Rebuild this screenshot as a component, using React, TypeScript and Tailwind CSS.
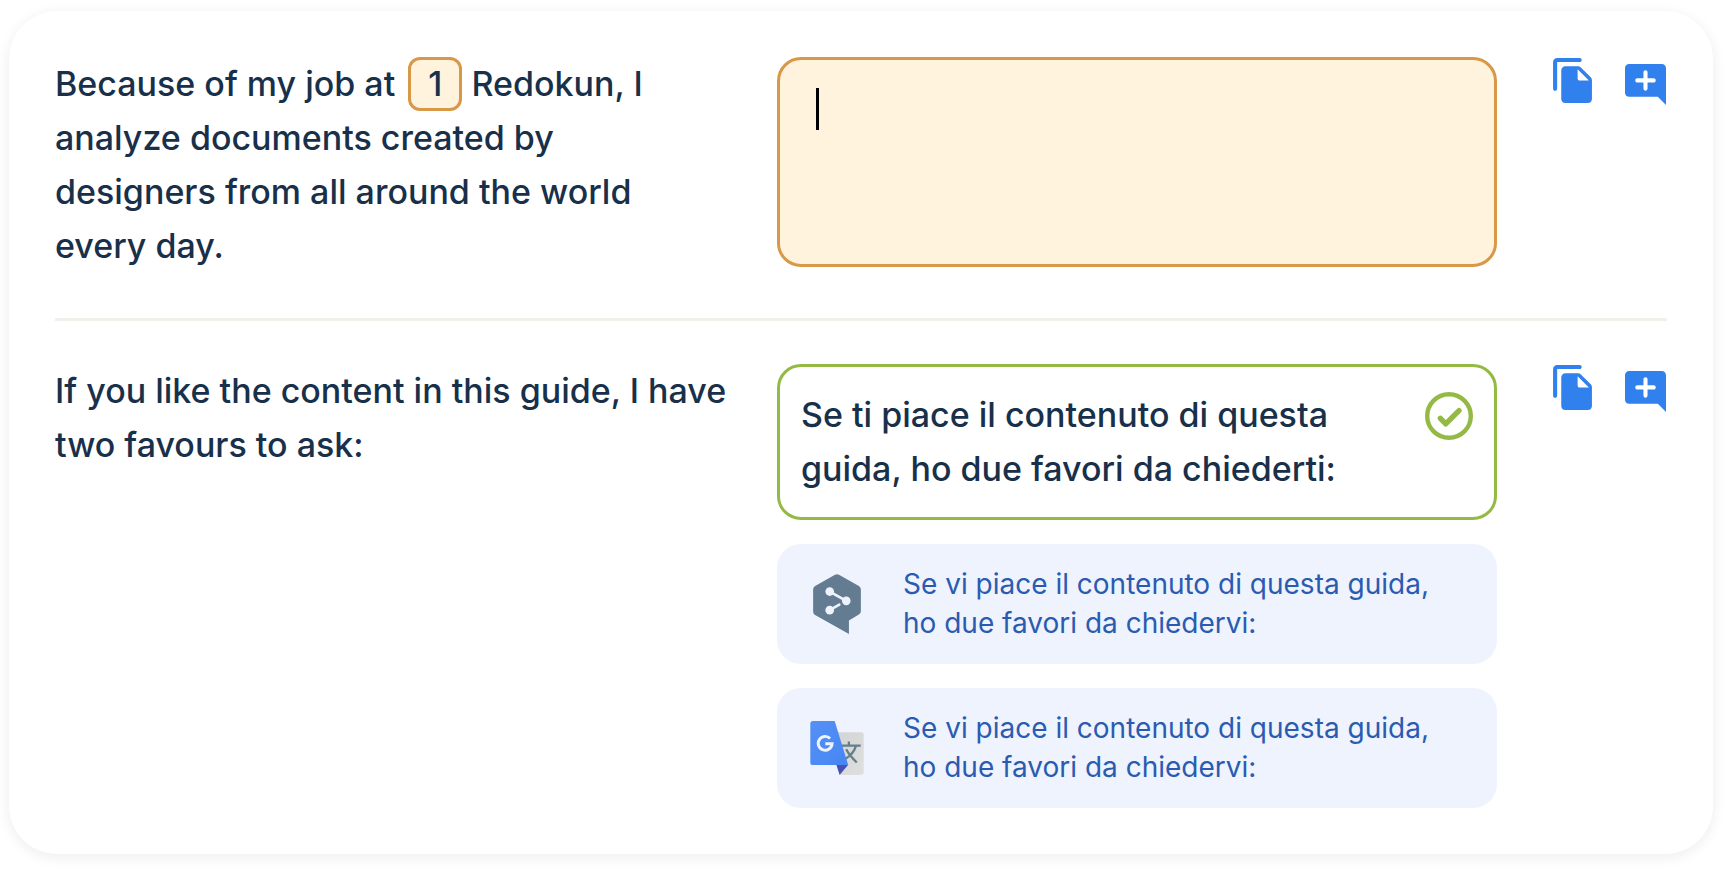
import type { ReactNode } from "react";

function CopyIcon() {
  return (
    <svg viewBox="2 1 19 22" className="h-[45px] w-[39px]" fill="currentColor" aria-hidden="true">
      <path d="M15 1H4c-1.1 0-2 .9-2 2v13c0 .55.45 1 1 1s1-.45 1-1V3h11c.55 0 1-.45 1-1s-.45-1-1-1zm.59 4.59l4.83 4.83c.37.37.58.88.58 1.41V21c0 1.1-.9 2-2 2H7.99C6.89 23 6 22.1 6 21l.01-14c0-1.1.89-2 1.99-2h6.17c.53 0 1.04.21 1.42.59zM15 12h4.5L14 6.5V11c0 .55.45 1 1 1z" />
    </svg>
  );
}

function AddCommentIcon() {
  return (
    <svg viewBox="2 2 20 20" className="size-[41px]" fill="currentColor" aria-hidden="true">
      <path d="M22 4c0-1.1-.9-2-2-2H4c-1.1 0-2 .9-2 2v12c0 1.1.9 2 2 2h14l4 4V4zm-6 7h-3v3c0 .55-.45 1-1 1s-1-.45-1-1v-3H8c-.55 0-1-.45-1-1s.45-1 1-1h3V6c0-.55.45-1 1-1s1 .45 1 1v3h3c.55 0 1 .45 1 1s-.45 1-1 1z" />
    </svg>
  );
}

function CheckIcon() {
  return (
    <svg viewBox="0 0 48 48" className="size-12" fill="none" stroke="#94ba45" role="img" aria-label="Translated">
      <circle cx="24" cy="24" r="21.8" strokeWidth="4.4" />
      <path d="M15.4 26.3L20.7 31.8L34 18.7" strokeWidth="5.4" strokeLinecap="round" strokeLinejoin="round" />
    </svg>
  );
}

function DeeplIcon() {
  return (
    <svg viewBox="99 100 144 181" className="h-[60px] w-12" aria-hidden="true">
      <path
        d="M165 102.500Q171 99 177 102.500L237 136.500Q243 140 243 147V212Q243 219 237 222.500L207 240V281L105 223.500Q99 220 99 213V147Q99 140 105 136.500Z"
        fill="#647c91"
      />
      <g fill="#eef3fe" stroke="#eef3fe">
        <circle cx="149" cy="153" r="13" stroke="none" />
        <circle cx="199" cy="181" r="13" stroke="none" />
        <circle cx="149" cy="209" r="13" stroke="none" />
        <path d="M149 153L199 181M149 209L178 192.500" strokeWidth="8" strokeLinecap="round" />
      </g>
    </svg>
  );
}

function GoogleTranslateIcon() {
  return (
    <svg viewBox="90 106 162 164" className="size-[54px]" aria-hidden="true">
      <defs>
        <linearGradient id="gt-blue" x1="0" y1="0" x2="1" y2="1">
          <stop offset="0" stopColor="#5590f5" />
          <stop offset="1" stopColor="#4686f3" />
        </linearGradient>
        <linearGradient id="gt-gray" x1="0" y1="0" x2="1" y2="1">
          <stop offset="0" stopColor="#d2d3d3" />
          <stop offset="1" stopColor="#dfdfdf" />
        </linearGradient>
      </defs>
      <path d="M160 140H244Q252 140 252 148V262Q252 270 244 270H179Z" fill="url(#gt-gray)" />
      <path
        d="M186 181H243M207 168V181M228 183Q223 205 194 223M199 192Q208 210 231 232"
        fill="none"
        stroke="#647f89"
        strokeWidth="7"
      />
      <path d="M169 239H205L179 270Z" fill="#4651b8" />
      <path d="M98 106H164L205 240H98Q90 240 90 232V114Q90 106 98 106Z" fill="url(#gt-blue)" />
      <path
        d="M150 159A21 21 0 1 0 156 175H135.500"
        fill="none"
        stroke="#eef3fb"
        strokeWidth="9"
      />
    </svg>
  );
}

function Actions() {
  return (
    <div className="flex items-start justify-end gap-[33px] pt-px pr-px text-[#3080ed]">
      <button type="button" aria-label="Copy source text">
        <CopyIcon />
      </button>
      <button type="button" aria-label="Add comment" className="mt-1.5">
        <AddCommentIcon />
      </button>
    </div>
  );
}

function Suggestion({ icon, text }: { icon: ReactNode; text: string }) {
  return (
    <button
      type="button"
      className="flex w-full items-center gap-[39px] rounded-3xl bg-[#eef3fe] px-[33px] py-[21px] text-left text-[28px] leading-[39px] text-[#2b5bb0]"
    >
      <span className="flex w-[54px] shrink-0 justify-center">{icon}</span>
      <span>{text}</span>
    </button>
  );
}

const row = "grid grid-cols-[minmax(0,17fr)_minmax(0,18fr)_128px] items-start gap-x-[42px]";
const suggestion = "Se vi piace il contenuto di questa guida, ho due favori da chiedervi:";

export default function App() {
  return (
    <div className="bg-white px-[9px] pt-[11px] pb-[22px] font-['Inter','Liberation_Sans',sans-serif] text-[34px] leading-[54px] font-medium text-[#18304a]">
      <main className="mr-2 rounded-[48px] bg-white px-[46px] py-[46px] shadow-[0_3px_14px_rgba(10,30,30,0.08)]">
        <section className={row}>
          <label htmlFor="target-1" className="pr-10">
            Because of my job at{" "}
            <span className="-my-1 ml-1 inline-block w-[54px] rounded-xl border-3 border-[#d99748] bg-[#fff3dd] text-center leading-[48px]">
              1
            </span>{" "}
            Redokun, I analyze documents created by designers from all around the world every day.
          </label>
          <div className="relative">
            <textarea
              id="target-1"
              rows={3}
              className="block h-[210px] w-full resize-none rounded-3xl border-3 border-[#d99748] bg-[#fff3dd] px-9 py-6 caret-transparent outline-none"
            />
            <span className="pointer-events-none absolute top-[31px] left-[39px] h-[42px] w-[3px] bg-black" />
          </div>
          <Actions />
        </section>

        <hr className="mt-[45px] mb-[43px] border-t-3 border-[#f1f1ec]" />

        <section className={row}>
          <label htmlFor="target-2">If you like the content in this guide, I have two favours to ask:</label>
          <div className="flex flex-col gap-6">
            <div className="relative">
              <textarea
                id="target-2"
                rows={2}
                defaultValue="Se ti piace il contenuto di questa guida, ho due favori da chiederti:"
                className="block w-full resize-none overflow-hidden rounded-3xl border-3 border-[#94ba45] bg-white py-[21px] pr-[96px] pl-[21px] outline-none"
              />
              <span className="absolute top-7 right-6">
                <CheckIcon />
              </span>
            </div>
            <div className="flex flex-col gap-6 font-normal">
              <Suggestion icon={<DeeplIcon />} text={suggestion} />
              <Suggestion icon={<GoogleTranslateIcon />} text={suggestion} />
            </div>
          </div>
          <Actions />
        </section>
      </main>
    </div>
  );
}
